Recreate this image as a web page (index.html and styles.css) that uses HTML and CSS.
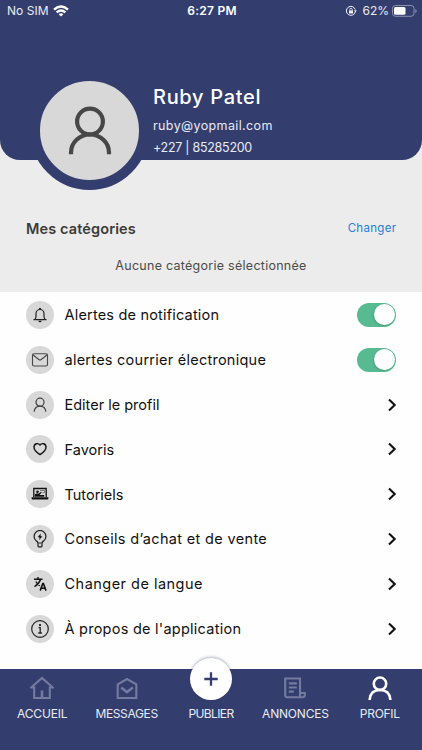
FILE: index.html
```html
<!DOCTYPE html>
<html lang="fr">
<head>
<meta charset="utf-8">
<meta name="viewport" content="width=device-width, initial-scale=1">
<title>Profil</title>
<link rel="stylesheet" href="styles.css">
</head>
<body>
<div class="app">
  <header class="header">
    <div class="status">
      <div class="status-left">
        <span class="carrier">No SIM</span>
        <svg width="16" height="12" viewBox="0 0 16 12" fill="none" stroke="#fff" stroke-width="2.300"><path d="M1 4.600Q8-1.600 15 4.600M3.600 7.400Q8 3.600 12.400 7.400"/><path d="M8 11.600L5.600 9.200Q8 7.200 10.400 9.200Z" fill="#fff" stroke="none"/></svg>
      </div>
      <span class="time">6:27 PM</span>
      <div class="status-right">
        <svg width="12" height="12" viewBox="0 0 12 12" fill="none" stroke="#f1f2f8"><path d="M10.300 6.800A4.500 4.500 0 1 1 10.200 4.500"/><path d="M8.900 5.300h2.900l-1.400 2z" fill="#f1f2f8" stroke="none"/><path d="M4 5.500h4v3H4z" fill="#f1f2f8" stroke="none"/><path d="M4.800 5.700V4.500a1.200 1.200 0 0 1 2.400 0v1.200" stroke-width=".8"/></svg>
        <span class="percent">62%</span>
        <svg class="battery" width="25" height="12" viewBox="0 0 25 12"><rect x=".5" y=".5" width="21.500" height="10.800" rx="3" fill="none" stroke="#8b91ae"/><rect x="2" y="2" width="11.500" height="7.800" rx="1.500" fill="#fff"/><path d="M23.300 4v4q1.400-.6 1.400-2t-1.400-2z" fill="#8b91ae"/></svg>
      </div>
    </div>
    <div class="identity">
      <div class="avatar">
        <svg width="44" height="50" viewBox="0 0 44 50" fill="none" stroke="#474747" stroke-width="4.200"><circle cx="22" cy="15.500" r="12.900"/><path d="M3 48.300V46.500A19 18 0 0 1 41 46.500V48.300"/></svg>
      </div>
      <div class="details">
        <h1 class="name">Ruby Patel</h1>
        <p class="email">ruby@yopmail.com</p>
        <p class="phone">+227 | 85285200</p>
      </div>
    </div>
  </header>

  <section class="categories">
    <div class="categories-head">
      <h2 class="title">Mes catégories</h2>
      <a class="change">Changer</a>
    </div>
    <p class="empty">Aucune catégorie sélectionnée</p>
  </section>

  <main class="list">
    <div class="row">
      <span class="icon"><svg width="18" height="18" viewBox="0 0 18 18" fill="none" stroke="#222" stroke-width="1.200"><path d="M2.500 13.600h13M4 13.300q1-1.300 1-3V7.500a4 4 0 0 1 8 0v2.800q0 1.700 1 3"/><path d="M8 2.800h2" stroke-width="1.500"/><path d="M7.300 14.700h3.400q-.4 1.500-1.700 1.500t-1.700-1.500z" fill="#111" stroke="none"/></svg></span>
      <span class="label l1">Alertes de notification</span><span class="toggle"></span>
    </div>
    <div class="row">
      <span class="icon"><svg width="18" height="16" viewBox="0 0 18 16" fill="none" stroke="#484848" stroke-width="1.100"><rect x="1.500" y="1.800" width="15" height="12.200" rx="1.500"/><path d="M1.800 2.800L7.800 7.500q1.200.8 2.400 0L16.200 2.800"/></svg></span>
      <span class="label l2">alertes courrier électronique</span><span class="toggle"></span>
    </div>
    <div class="row">
      <span class="icon"><svg width="16" height="16" viewBox="0 0 16 16" fill="none" stroke="#444" stroke-width="1.250"><circle cx="8" cy="5.200" r="4"/><path d="M2.300 14.800v-.5a5.700 5.300 0 0 1 11.400 0v.5"/></svg></span>
      <span class="label l3">Editer le profil</span><svg class="chevron" viewBox="0 0 10 16"><path d="M2 2.400L7.700 8L2 13.600"/></svg>
    </div>
    <div class="row">
      <span class="icon"><svg width="16" height="16" viewBox="0 0 16 16" fill="none" stroke="#111" stroke-width="1.400" stroke-linejoin="round"><path d="M8 4.100C6.200 1.500 2 2.400 2 6.200C2 9 4.800 11.600 8 13.600C11.200 11.600 14 9 14 6.200C14 2.400 9.800 1.500 8 4.100Z"/></svg></span>
      <span class="label l4">Favoris</span><svg class="chevron" viewBox="0 0 10 16"><path d="M2 2.400L7.700 8L2 13.600"/></svg>
    </div>
    <div class="row">
      <span class="icon"><svg width="18" height="14" viewBox="0 0 18 14"><path d="M2.800 10V1.500h12.400V10" fill="none" stroke="#111" stroke-width="1.300"/><path d="M.6 10.300h16.800v1.200q0 1-1 1H1.600q-1 0-1-1z" fill="#111"/><circle cx="6.500" cy="4.700" r="1.300" fill="#111"/><path d="M3.800 9.800V8q0-1.500 1.700-1.500h2.300l2.200-1.700.7.700L8.500 8h4.700v1.800z" fill="#111"/><path d="M9 3.500h4.500v2.200h-2" fill="none" stroke="#555" stroke-width=".7"/></svg></span>
      <span class="label l5">Tutoriels</span><svg class="chevron" viewBox="0 0 10 16"><path d="M2 2.400L7.700 8L2 13.600"/></svg>
    </div>
    <div class="row">
      <span class="icon"><svg width="16" height="18" viewBox="0 0 16 18" fill="none" stroke="#1c1c1c" stroke-width="1.200"><path d="M5.600 13V12.300Q5.600 11.500 4.200 10.900A5.900 5.900 0 1 1 11.800 10.900Q10.400 11.500 10.400 12.300V13z"/><path d="M6 13.500v2.600q0 .7.700.7h2.600q.7 0 .7-.7v-2.600"/><path d="M8.700 3.600L5.700 7.200h1.800L7.300 9.900l3-3.700H8.500z" fill="#111" stroke="none"/></svg></span>
      <span class="label l6">Conseils d’achat et de vente</span><svg class="chevron" viewBox="0 0 10 16"><path d="M2 2.400L7.700 8L2 13.600"/></svg>
    </div>
    <div class="row">
      <span class="icon"><svg width="14" height="16" viewBox="0 0 14 16" fill="none" stroke="#111" stroke-width="1.400"><path d="M1 3.200h8.500M5 1v2.200M7.500 3.500Q6 8 1.500 10.600M2.800 5.500Q4.600 8.600 7 9.700"/><path d="M7.200 14.600L9.800 7.500h.6L13 14.600M8.200 12.300h3.900" stroke-width="1.600"/></svg></span>
      <span class="label l7">Changer de langue</span><svg class="chevron" viewBox="0 0 10 16"><path d="M2 2.400L7.700 8L2 13.600"/></svg>
    </div>
    <div class="row">
      <span class="icon"><svg width="20" height="20" viewBox="0 0 20 20"><circle cx="10" cy="10" r="8.300" fill="none" stroke="#222" stroke-width="1.200"/><circle cx="10" cy="6.100" r="1.100" fill="#111"/><path d="M8.600 8.700H10.200V13.800M8.300 14h3.600" fill="none" stroke="#222" stroke-width="1.300"/></svg></span>
      <span class="label l8">À propos de l'application</span><svg class="chevron" viewBox="0 0 10 16"><path d="M2 2.400L7.700 8L2 13.600"/></svg>
    </div>
  </main>

  <nav class="nav">
    <div class="tab"><svg width="24" height="24" viewBox="0 0 24 24" fill="none" stroke="#747b9e" stroke-width="2.100"><path d="M1.200 11.500L12 2l10.800 9.500h-3V22H4.200V11.500z"/><path d="M12 14.500v7" stroke-width="2.600"/></svg><span class="n1">ACCUEIL</span></div>
    <div class="tab"><svg width="24" height="24" viewBox="0 0 24 24" fill="none" stroke="#747b9e" stroke-width="2.100"><path d="M2.700 8.400L12 3l9.300 5.400V22H2.700z"/><path d="M6.200 11.600l5.800 4.500 5.800-4.500" stroke-width="2.500"/></svg><span class="n2">MESSAGES</span></div>
    <div class="tab"><div class="publish"><svg width="16" height="16" viewBox="0 0 16 16" stroke="#333e6e" stroke-width="2.300"><path d="M8 1.300v13.400M1.300 8h13.400"/></svg></div><span class="n3">PUBLIER</span></div>
    <div class="tab"><svg width="24" height="24" viewBox="0 0 24 24" fill="none" stroke="#747b9e" stroke-width="2.100"><path d="M17 17V2.500H2.200v16.800q0 2 2 2h15.300q2.300 0 2.300-2V17H17v2.500q0 1.800 1.300 1.800"/><path d="M5.800 7.400h8M5.800 11.500h8M5.800 15.600h5"/></svg><span class="n4">ANNONCES</span></div>
    <div class="tab active"><svg width="24" height="24" viewBox="0 0 24 24" fill="none" stroke="#fff" stroke-width="2.600"><circle cx="12" cy="7.700" r="6.200"/><path d="M1.700 24v-.7Q2.600 14 12 14T22.300 23.300V24"/></svg><span class="n5">PROFIL</span></div>
  </nav>
</div>
</body>
</html>
```
FILE: styles.css
```css
* { box-sizing: border-box; }
body { margin: 0; font-family: Inter, "Open Sans", sans-serif; background: #fefefe; }
h1, h2, p { margin: 0; font-weight: 400; }
svg { flex: none; display: block; }
.app { width: 422px; height: 750px; display: flex; flex-direction: column; overflow: hidden; background: linear-gradient(#ececec 292px, #fefefe 292px); }

.header { height: 160px; flex: none; background: #333e6e; border-radius: 0 0 20px 20px; color: #fff; }
.status { height: 22px; display: grid; grid-template-columns: 1fr auto 1fr; align-items: center; padding: 0 5px 1px 7px; font-size: 12px; color: #e9ebf5; }
.status-left, .status-right { display: flex; align-items: center; }
.status-left { gap: 4px; }
.carrier { letter-spacing: .05px; }
.status-right { justify-content: flex-end; }
.percent { margin: 0 3px 0 5px; }
.time { font-weight: 600; letter-spacing: .25px; color: #fff; }
.identity { display: flex; padding: 49px 0 0 30px; }
.avatar { width: 119px; height: 119px; border: 10px solid #333e6e; border-radius: 50%; background: #d8d8d8; display: flex; align-items: center; justify-content: center; }
.details { padding: 12px 0 0 4px; }
.name { font-size: 20px; line-height: 28px; font-weight: 500; letter-spacing: .68px; }
.email, .phone { font-size: 12.500px; line-height: 22px; color: #e9ebf5; }
.email { margin-top: 4px; letter-spacing: .38px; }
.phone { letter-spacing: -.27px; }

.categories { height: 132px; flex: none; }
.categories-head { display: flex; justify-content: space-between; align-items: center; height: 24px; margin: 56px 26px 0; }
.title { font-size: 14.500px; font-weight: 600; letter-spacing: .12px; color: #3b3b3b; }
.change { font-size: 11.500px; letter-spacing: .3px; margin-right: -.3px; color: #2380d8; }
.empty { margin-top: 15px; line-height: 22px; text-align: center; font-size: 12.500px; letter-spacing: .27px; color: #4b4b4b; }

.list { height: 377px; flex: none; display: grid; grid-auto-rows: 44.800px; padding: .6px 26px 0; align-content: start; }
.row { display: flex; align-items: center; }
.icon { width: 28px; height: 28px; border-radius: 50%; background: #d8d8d8; display: flex; align-items: center; justify-content: center; margin-right: 10.500px; }
.label { flex: 1; font-size: 14.500px; color: #111; white-space: nowrap; }
.l1 { letter-spacing: .19px; }
.l2 { letter-spacing: .25px; }
.l6 { letter-spacing: .34px; }
.l7 { letter-spacing: .48px; }
.l8 { letter-spacing: .25px; }
.toggle { width: 39px; height: 24px; border-radius: 12px; background: #58ba91; display: flex; justify-content: flex-end; align-items: center; padding-right: 1px; }
.toggle::after { content: ""; width: 21px; height: 21px; border-radius: 50%; background: #fff; box-shadow: -1px 1px 2px #2c795a55; }
.chevron { width: 10px; height: 16px; margin-right: -1px; fill: none; stroke: #111; stroke-width: 2.100; }

.nav { height: 81px; flex: none; background: #333e6e; display: grid; grid-template-columns: repeat(5, 1fr); color: #e9ebf5; }
.tab { display: flex; flex-direction: column; align-items: center; padding-top: 7px; }
.tab span { font-size: 12px; line-height: 20px; margin-top: 4px; white-space: nowrap; }
.tab .n1 { letter-spacing: -.15px; }
.tab .n2 { letter-spacing: -.35px; }
.tab .n3 { letter-spacing: -.6px; }
.tab .n4 { letter-spacing: -.2px; }
.tab .n5 { letter-spacing: -.3px; }
.publish { width: 42px; height: 42px; margin-top: -18px; border-radius: 50%; background: #fff; box-shadow: 0 -1px 3px #333e6e66; display: flex; align-items: center; justify-content: center; }
```
